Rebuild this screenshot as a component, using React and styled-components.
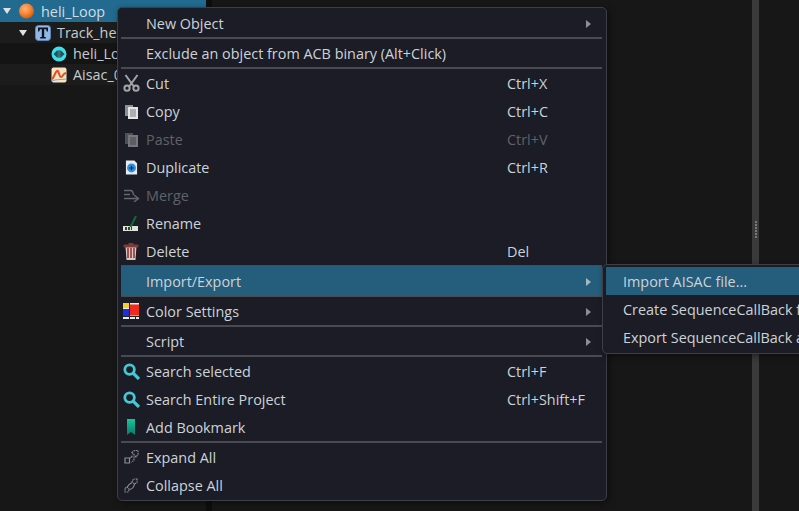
import React from "react";
import styled, { createGlobalStyle } from "styled-components";

const Global = createGlobalStyle`
  html, body { margin: 0; padding: 0; background: #171717; overflow: hidden; }
  #root { width: 799px; height: 511px; }
`;

const Page = styled.div`
  position: relative;
  width: 799px;
  height: 511px;
  display: flex;
  background: #171717;
  overflow: hidden;
  font-family: "Open Sans", "Noto Sans", sans-serif;
  font-size: 14.4px;
  color: #ccd3d8;
`;
const Tree = styled.div`
  width: 206px;
  flex: none;
  background: #171717;
  display: flex;
  flex-direction: column;
`;
const Gutter = styled.div`
  width: 6px;
  flex: none;
  background: #0e0e0e;
`;
const Center = styled.div`
  width: 540px;
  flex: none;
  background: #171717;
`;
const Splitter = styled.div`
  width: 7px;
  flex: none;
  background: #3a3a3a;
  display: flex;
  align-items: center;
  justify-content: center;
`;
const Grip = styled.div`
  width: 2px;
  height: 18px;
  margin-top: -52px;
  background: repeating-linear-gradient(#7a7a7a 0 2px, #3a3a3a 2px 3px);
`;
const Right = styled.div`
  flex: 1;
  background: #171717;
`;
const TreeRow = styled.div`
  height: ${p => p.$h || 21}px;
  display: flex;
  align-items: center;
  flex: none;
  gap: 6px;
  padding-left: ${p => p.$indent}px;
  background: ${p => p.$bg};
  white-space: nowrap;
  color: ${p => p.$color || "#c3ccd2"};
`;
const Caret = styled.span`
  width: 0;
  height: 0;
  border-left: 4px solid transparent;
  border-right: 4px solid transparent;
  border-top: 6px solid #dfe3e6;
  margin-right: 2px;
`;
const IconCell = styled.span`
  display: flex;
  align-items: center;
  justify-content: center;
  width: 16px;
  height: 16px;
  flex: none;
`;

const Menu = styled.div`
  position: absolute;
  left: 117px;
  top: 7px;
  box-sizing: border-box;
  padding: 1px 3px 0;
  width: 490px;
  height: 494px;
  background: #1b1c26;
  border: 1px solid #3e3f44;
  border-radius: 5px;
  box-shadow: 2px 2px 6px rgba(0,0,0,.45);
`;
const SubMenu = styled.div`
  position: absolute;
  left: 602px;
  top: 264px;
  width: 260px;
  height: 90px;
  box-sizing: border-box;
  padding: 2px 3px;
  background: #1b1c26;
  border: 1px solid #3e3f44;
  border-radius: 5px;
  box-shadow: 2px 2px 6px rgba(0,0,0,.45);
`;
const Sep = styled.div`
  height: 2px;
  background: #4a4b4f;
  width: 481px;
`;
const Item = styled.div`
  height: ${p => p.$active ? 30 : 28}px;
  margin: ${p => p.$active ? "-1px 0" : "0"};
  display: flex;
  align-items: center;
  width: 481px;
  background: ${p => p.$active ? "#255d7c" : "transparent"};
  color: ${p => p.$disabled ? "#5f6267" : "#ccd3d8"};
  white-space: nowrap;
  position: relative;
`;
const IconSlot = styled.span`
  width: 20px;
  margin-right: 5px;
  flex: none;
  display: flex;
  align-items: center;
  justify-content: center;
`;
const Label = styled.span`
  width: 361px;
  flex: none;
`;
const Shortcut = styled.span`
  color: ${p => p.$disabled ? "#5f6267" : "#ccd3d8"};
`;
const Arrow = styled.span`
  position: absolute;
  left: 465px;
  top: 50%;
  margin-top: -3px;
  width: 0;
  height: 0;
  border-top: 4px solid transparent;
  border-bottom: 4px solid transparent;
  border-left: 5px solid ${p => p.$active ? "#a9b8c2" : "#8d8f93"};
`;
const SubItem = styled.div`
  height: 28px;
  display: flex;
  align-items: center;
  padding-left: 17px;
  white-space: nowrap;
  background: ${p => p.$active ? "#255d7c" : "transparent"};
`;

const Orange = () => (
  <svg width="16" height="16" viewBox="0 0 16 16">
    <defs>
      <radialGradient id="org" cx="40%" cy="35%" r="70%">
        <stop offset="0" stopColor="#ffb27a" />
        <stop offset=".55" stopColor="#f58431" />
        <stop offset="1" stopColor="#c75a12" />
      </radialGradient>
    </defs>
    <circle cx="7.500" cy="8" r="7.500" fill="url(#org)" />
  </svg>
);
const TIcon = () => (
  <svg width="16" height="16" viewBox="0 0 16 16">
    <rect x=".5" y=".5" width="15" height="15" rx="3" fill="#8fb8e8" stroke="#5f86b8" />
    <path d="M3 2.500h10v4h-1.200L11 4.300H9.200v7.700h1.600v1.500H5.200V12h1.600V4.300H5L4.200 6.500H3z" fill="#10141c" />
  </svg>
);
const WaveIcon = () => (
  <svg width="16" height="16" viewBox="0 0 16 16">
    <circle cx="8" cy="8" r="7.500" fill="#3fdfe8" />
    <path d="M2.500 8L6 4.500h4L13.500 8 10 11.500H6z" fill="#24505e" />
    <rect x="6.500" y="5" width="3" height="6" fill="#3b6f7c" />
  </svg>
);
const AisacIcon = () => (
  <svg width="16" height="16" viewBox="0 0 16 16">
    <rect x=".5" y=".5" width="15" height="15" rx="2" fill="#f6e3c6" />
    <path d="M1 12C3 11 4 5 6 4s2 6 4 6 2-4 5-4" fill="none" stroke="#e2501e" strokeWidth="2" />
    <path d="M1 14c4-2 8-1 14-2" fill="none" stroke="#7ba5d8" />
  </svg>
);
const Scissors = () => (
  <svg width="17" height="18" viewBox="0 0 17 18" fill="none" stroke="#a3a5a8" strokeWidth="2">
    <path d="M2.500 1l8 11M14.500 1l-8 11" />
    <circle cx="4" cy="14.200" r="2.600" />
    <circle cx="13" cy="14.200" r="2.600" />
  </svg>
);
const Copy = ({ dim }) => (
  <svg width="15" height="15" viewBox="0 0 15 15" opacity={dim ? 0.45 : 1}>
    <rect x="1" y="1" width="8" height="11" fill="#8e9093" />
    <rect x="4" y="3" width="10" height="12" fill="#e4e5e6" />
    <path d="M6 6h6M6 8h6M6 10h6M6 12h6" stroke="#77797c" />
  </svg>
);
const Dup = () => (
  <svg width="13" height="15" viewBox="0 0 14 15">
    <path d="M1 0h9l3 3v12H1z" fill="#e8eaec" />
    <circle cx="7" cy="8" r="4.800" fill="#2d8fe0" />
    <path d="M7 5.500v5M4.500 8h5" stroke="#0e2a44" strokeWidth="1.200" />
  </svg>
);
const Merge = () => (
  <svg width="17" height="13" viewBox="0 0 17 13" fill="none" stroke="#66686b" strokeWidth="1.400">
    <path d="M1 1.500h7c2 0 2 2 2.500 4.500M1 5.500h6M1 9.500h14" />
    <path d="M11 6l4.500 3.500L11 13" />
  </svg>
);
const Rename = () => (
  <svg width="16" height="15" viewBox="0 0 16 15">
    <rect x="0" y="10" width="15" height="5" fill="#e0e2da" />
    <path d="M2 11h2v3H2zM5 11h2v3H5zM8 11h1v3H8z" fill="#3b3d36" />
    <path d="M7.500 11L13 0" stroke="#0e6b35" strokeWidth="2" />
  </svg>
);
const Trash = () => (
  <svg width="16" height="17" viewBox="0 0 15 17">
    <path d="M2 3l1 14h9l1-14z" fill="#d8c9c6" />
    <path d="M4.500 5v10M7.500 5v10M10.500 5v10" stroke="#8a2f2b" strokeWidth="1.500" />
    <rect x="0" y="1.500" width="15" height="3" rx="1" fill="#7f3a37" />
    <rect x="5" y="0" width="5" height="2" fill="#7f3a37" />
  </svg>
);
const Palette = () => (
  <svg width="16" height="16" viewBox="0 0 16 16">
    <rect width="16" height="16" fill="#e8e8e8" />
    <rect x="7" y="1.500" width="9" height="11" fill="#f02a1c" />
    <rect x="0" y="0" width="6" height="5" fill="#f2d21f" />
    <rect x="0" y="6" width="6" height="7" fill="#1b2fe0" />
    <rect x="0" y="5" width="6" height="1" fill="#e8e8e8" />
    <rect x="6" y="0" width="1" height="16" fill="#222" />
    <rect x="0" y="13" width="16" height="1" fill="#222" />
    <rect x="12" y="13" width="1" height="3" fill="#222" />
  </svg>
);
const Search = () => (
  <svg width="17" height="17" viewBox="0 0 16 16" fill="none" stroke="#46c7d4">
    <circle cx="6.200" cy="6.200" r="4.500" strokeWidth="2.600" />
    <path d="M9.500 9.500L15 15" strokeWidth="3" />
  </svg>
);
const Bookmark = () => (
  <svg width="8" height="16" viewBox="0 0 8 16">
    <defs>
      <linearGradient id="bm" x1="0" y1="0" x2="0" y2="1">
        <stop offset="0" stopColor="#17c49e" />
        <stop offset="1" stopColor="#0a7a68" />
      </linearGradient>
    </defs>
    <path d="M0 0h8v16L4 13 0 16z" fill="url(#bm)" />
  </svg>
);
const Expand = () => (
  <svg width="15" height="14" viewBox="0 0 15 14" fill="none" stroke="#8b8d90" strokeWidth="1.200">
    <path d="M1 8h4.500v5H1z" />
    <path d="M8 2.500l2.500-2 3.500 0 0 4-2 2.500z" strokeDasharray="1.600 .7" />
    <path d="M5.500 8.500L9 5M7 7h3v3l-2.500 2.500" strokeDasharray="1.500 .8" />
  </svg>
);
const Collapse = () => (
  <svg width="14" height="15" viewBox="0 0 14 15" fill="none" stroke="#8b8d90" strokeWidth="1.200">
    <path d="M1 10.500l2-1.500 2.500 2.500L4 14H1z" strokeDasharray="1.500 .7" />
    <path d="M13 1v3.500l-2.500 1.500L8 3.500 9.500 1z" strokeDasharray="1.500 .7" />
    <path d="M3 9.500C4 7 6 5.500 8 4.500M5.500 11.500C8 11 10 9 10.500 6" />
  </svg>
);

const rows1 = [
  { label: "Cut", icon: <Scissors />, key: "Ctrl+X" },
  { label: "Copy", icon: <Copy />, key: "Ctrl+C" },
  { label: "Paste", icon: <Copy dim />, key: "Ctrl+V", disabled: true },
  { label: "Duplicate", icon: <Dup />, key: "Ctrl+R" },
  { label: "Merge", icon: <Merge />, disabled: true },
  { label: "Rename", icon: <Rename /> },
  { label: "Delete", icon: <Trash />, key: "Del" },
];
const rows2 = [
  { label: "Search selected", icon: <Search />, key: "Ctrl+F" },
  { label: "Search Entire Project", icon: <Search />, key: "Ctrl+Shift+F" },
  { label: "Add Bookmark", icon: <Bookmark /> },
];
const rows3 = [
  { label: "Expand All", icon: <Expand /> },
  { label: "Collapse All", icon: <Collapse /> },
];

const Row = ({ label, icon, shortcut, disabled, active, arrow }) => (
  <Item $disabled={disabled} $active={active}>
    <IconSlot>{icon}</IconSlot>
    <Label>{label}</Label>
    {shortcut && <Shortcut $disabled={disabled}>{shortcut}</Shortcut>}
    {arrow && <Arrow $active={active} />}
  </Item>
);
const list = rows => rows.map(r => (
  <Row key={r.label} label={r.label} icon={r.icon} shortcut={r.key} disabled={r.disabled} />
));

export default function App() {
  return (
    <Page>
      <Global />
      <Tree>
        <TreeRow $indent={3} $h={22} $bg="#226a8f" $color="#d2dce2">
          <Caret /><IconCell><Orange /></IconCell><span>heli_Loop</span>
        </TreeRow>
        <TreeRow $indent={19} $bg="#1c1c1c">
          <Caret /><IconCell><TIcon /></IconCell><span>Track_heli_Loop</span>
        </TreeRow>
        <TreeRow $indent={51} $bg="#141414">
          <IconCell><WaveIcon /></IconCell><span>heli_Loop</span>
        </TreeRow>
        <TreeRow $indent={51} $bg="#1c1c1c">
          <IconCell><AisacIcon /></IconCell><span>Aisac_0</span>
        </TreeRow>
      </Tree>
      <Gutter />
      <Center />
      <Splitter><Grip /></Splitter>
      <Right />
      <Menu>
        <Row label="New Object" arrow />
        <Sep />
        <Row label="Exclude an object from ACB binary (Alt+Click)" />
        <Sep />
        {list(rows1)}
        <Sep />
        <Row label="Import/Export" arrow active />
        <Sep />
        <Row label="Color Settings" icon={<Palette />} arrow />
        <Sep />
        <Row label="Script" arrow />
        <Sep />
        {list(rows2)}
        <Sep />
        {list(rows3)}
      </Menu>
      <SubMenu>
        <SubItem $active>Import AISAC file...</SubItem>
        <SubItem>Create SequenceCallBack file</SubItem>
        <SubItem>Export SequenceCallBack as</SubItem>
      </SubMenu>
    </Page>
  );
}
